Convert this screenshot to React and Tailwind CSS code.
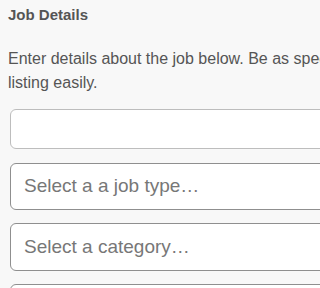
import React from 'react';

function App() {
  return (
    <div className="w-full h-screen min-h-[288px] overflow-hidden bg-[#f8f8f8]">
      <div className="w-[620px] pl-2 pt-[5.5px] font-['Liberation_Sans',Arial,sans-serif] text-[#555]">
        <h2 className="text-[15px] leading-[18px] font-bold">Job Details</h2>
        <p className="mt-[23px] text-[16px] leading-[24px]">
          Enter details about the job below. Be as specific as you can so people can find your
          <br />
          listing easily.
        </p>

        <div className="ml-[2px] mt-[14px] flex flex-col">
          <input
            type="text"
            className="h-[40px] w-full rounded-[6px] border border-[#bdbdbd] bg-white px-[13px] text-[19px] outline-none"
          />
          <input
            type="text"
            placeholder="Select a a job type…"
            className="mt-[14px] h-[47px] w-full rounded-[6px] border border-[#8f8f8f] bg-white px-[13px] text-[19px] placeholder:text-[#777] outline-none"
          />
          <input
            type="text"
            placeholder="Select a category…"
            className="mt-[13px] h-[48px] w-full rounded-[6px] border border-[#8f8f8f] bg-white px-[13px] text-[19px] placeholder:text-[#777] outline-none"
          />
          <input
            type="text"
            className="mt-[13px] h-[47px] w-full rounded-[6px] border border-[#8f8f8f] bg-white px-[13px] text-[19px] outline-none"
          />
        </div>
      </div>
    </div>
  );
}

export default App;
